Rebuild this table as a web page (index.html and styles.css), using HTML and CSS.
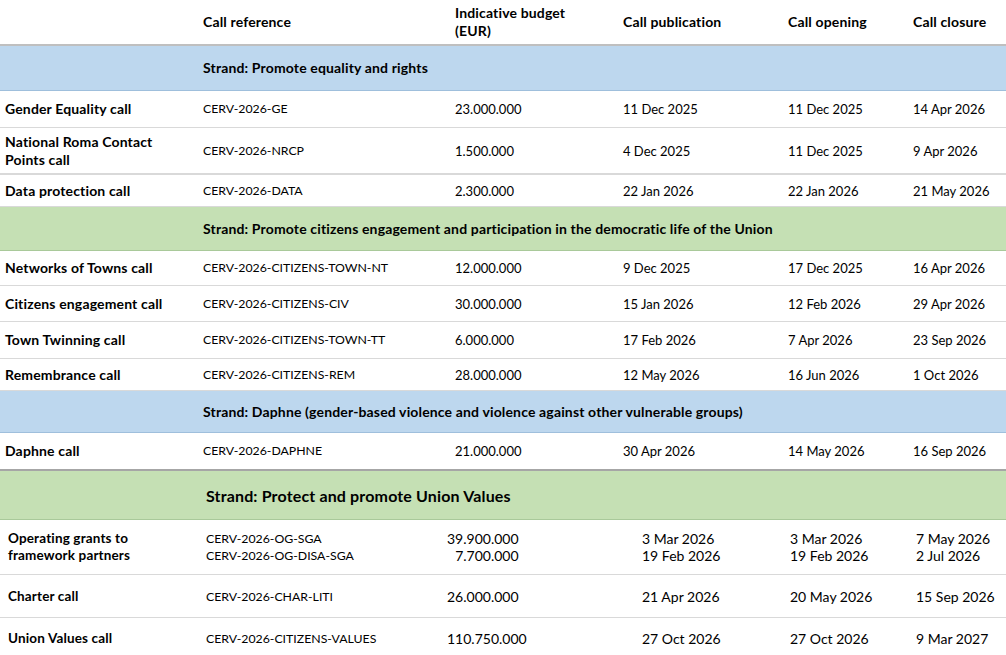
FILE: index.html
```html
<!DOCTYPE html>
<html lang="en">
<head>
<meta charset="utf-8">
<title>CERV 2026 calls</title>
<link rel="stylesheet" href="styles.css">
</head>
<body>
<table class="calls calls-top">
  <colgroup>
    <col class="c1"><col class="c2"><col class="c3"><col class="c4"><col class="c5"><col class="c6">
  </colgroup>
  <thead>
    <tr class="head">
      <th></th>
      <th>Call reference</th>
      <th>Indicative budget<br>(EUR)</th>
      <th>Call publication</th>
      <th>Call opening</th>
      <th>Call closure</th>
    </tr>
  </thead>
  <tbody>
    <tr class="strand blue s1"><td></td><td colspan="5">Strand: Promote equality and rights</td></tr>
    <tr class="r-gender"><th>Gender Equality call</th><td class="ref">CERV-2026-GE</td><td>23.000.000</td><td>11 Dec 2025</td><td>11 Dec 2025</td><td>14 Apr 2026</td></tr>
    <tr class="r-nrcp thick"><th>National Roma Contact<br>Points call</th><td class="ref">CERV-2026-NRCP</td><td>1.500.000</td><td>4 Dec 2025</td><td>11 Dec 2025</td><td>9 Apr 2026</td></tr>
    <tr class="r-data"><th>Data protection call</th><td class="ref">CERV-2026-DATA</td><td>2.300.000</td><td>22 Jan 2026</td><td>22 Jan 2026</td><td>21 May 2026</td></tr>
    <tr class="strand green s2"><td></td><td colspan="5">Strand: Promote citizens engagement and participation in the democratic life of the Union</td></tr>
    <tr class="r-net"><th>Networks of Towns call</th><td class="ref">CERV-2026-CITIZENS-TOWN-NT</td><td>12.000.000</td><td>9 Dec 2025</td><td>17 Dec 2025</td><td>16 Apr 2026</td></tr>
    <tr class="r-civ"><th>Citizens engagement call</th><td class="ref">CERV-2026-CITIZENS-CIV</td><td>30.000.000</td><td>15 Jan 2026</td><td>12 Feb 2026</td><td>29 Apr 2026</td></tr>
    <tr class="r-town"><th>Town Twinning call</th><td class="ref">CERV-2026-CITIZENS-TOWN-TT</td><td>6.000.000</td><td>17 Feb 2026</td><td>7 Apr 2026</td><td>23 Sep 2026</td></tr>
    <tr class="r-rem"><th>Remembrance call</th><td class="ref">CERV-2026-CITIZENS-REM</td><td>28.000.000</td><td>12 May 2026</td><td>16 Jun 2026</td><td>1 Oct 2026</td></tr>
    <tr class="strand blue s3"><td></td><td colspan="5">Strand: Daphne (gender-based violence and violence against other vulnerable groups)</td></tr>
    <tr class="r-daphne dark"><th>Daphne call</th><td class="ref">CERV-2026-DAPHNE</td><td>21.000.000</td><td>30 Apr 2026</td><td>14 May 2026</td><td>16 Sep 2026</td></tr>
  </tbody>
</table>
<table class="calls calls-bottom">
  <colgroup>
    <col class="c1"><col class="c2"><col class="c3"><col class="c4"><col class="c5"><col class="c6">
  </colgroup>
  <tbody>
    <tr class="strand green s4"><td></td><td colspan="5">Strand: Protect and promote Union Values</td></tr>
    <tr class="r-og"><th>Operating grants to<br>framework partners</th><td class="ref">CERV-2026-OG-SGA<br>CERV-2026-OG-DISA-SGA</td><td><span class="amounts">39.900.000<br>7.700.000</span></td><td>3 Mar 2026<br>19 Feb 2026</td><td>3 Mar 2026<br>19 Feb 2026</td><td>7 May 2026<br>2 Jul 2026</td></tr>
    <tr class="r-char"><th>Charter call</th><td class="ref">CERV-2026-CHAR-LITI</td><td>26.000.000</td><td>21 Apr 2026</td><td>20 May 2026</td><td>15 Sep 2026</td></tr>
    <tr class="r-union last"><th>Union Values call</th><td class="ref">CERV-2026-CITIZENS-VALUES</td><td>110.750.000</td><td>27 Oct 2026</td><td>27 Oct 2026</td><td>9 Mar 2027</td></tr>
  </tbody>
</table>
</body>
</html>
```
FILE: styles.css
```css
html, body {
  margin: 0;
  padding: 0;
  background: #ffffff;
}

body {
  font-family: Lato, "Open Sans", "Liberation Sans", sans-serif;
  color: #000000;
  width: 1006px;
  overflow: hidden;
}

.calls {
  width: 1006px;
  table-layout: fixed;
  border-collapse: separate;
  border-spacing: 0;
}

.calls th,
.calls td {
  padding: 0 0 0 5px;
  text-align: left;
  vertical-align: middle;
  white-space: nowrap;
  border-bottom: 1px solid #d9d9d9;
  font-size: 13px;
  line-height: 18px;
  font-weight: 400;
}

.calls th,
.calls .strand td {
  font-weight: 700;
  font-size: 14px;
  letter-spacing: 0.15px;
}

.calls td.ref {
  font-size: 12.3px;
}

/* top table columns */
.calls-top .c1 { width: 198px; }
.calls-top .c2 { width: 252px; }
.calls-top .c3 { width: 168px; }
.calls-top .c4 { width: 165px; }
.calls-top .c5 { width: 125px; }
.calls-top .c6 { width: 98px; }

.calls .head th {
  border-bottom: 2px solid #bfbfbf;
}

.calls .blue td {
  background: #bdd7ee;
  border-bottom: 1px solid #9fbfdc;
}

.calls .green td {
  background: #c5e0b4;
  border-bottom: 1px solid #a9c99a;
}

.head { height: 46px; }
.s1 { height: 45px; }
.r-gender { height: 37px; }
.r-nrcp { height: 47px; }
.r-data { height: 32px; }
.s2 { height: 44px; }
.r-net { height: 35px; }
.r-civ { height: 36px; }
.r-town { height: 37px; }
.r-rem { height: 32px; }
.s3 { height: 42px; }
.r-daphne { height: 38px; }

.calls .thick > * {
  border-bottom: 2px solid #d9d9d9;
}

.calls .dark > * {
  border-bottom: 2px solid #a6a6a6;
}

/* bottom table */
.calls-bottom th,
.calls-bottom td {
  padding-left: 8px;
  font-size: 14px;
  line-height: 17px;
}

.calls-bottom th {
  font-size: 13.5px;
}

.calls-bottom .c1 { width: 198px; }
.calls-bottom .c2 { width: 241px; }
.calls-bottom .c3 { width: 195px; }
.calls-bottom .c4 { width: 148px; }
.calls-bottom .c5 { width: 126px; }
.calls-bottom .c6 { width: 98px; }

.calls-bottom .s4 td {
  font-size: 16px;
}

.s4 { height: 49px; }
.r-og { height: 55px; }
.r-char { height: 43px; }
.r-union { height: 40px; }

.calls .last > * {
  border-bottom: none;
}

.amounts {
  display: inline-block;
  text-align: right;
}
```
